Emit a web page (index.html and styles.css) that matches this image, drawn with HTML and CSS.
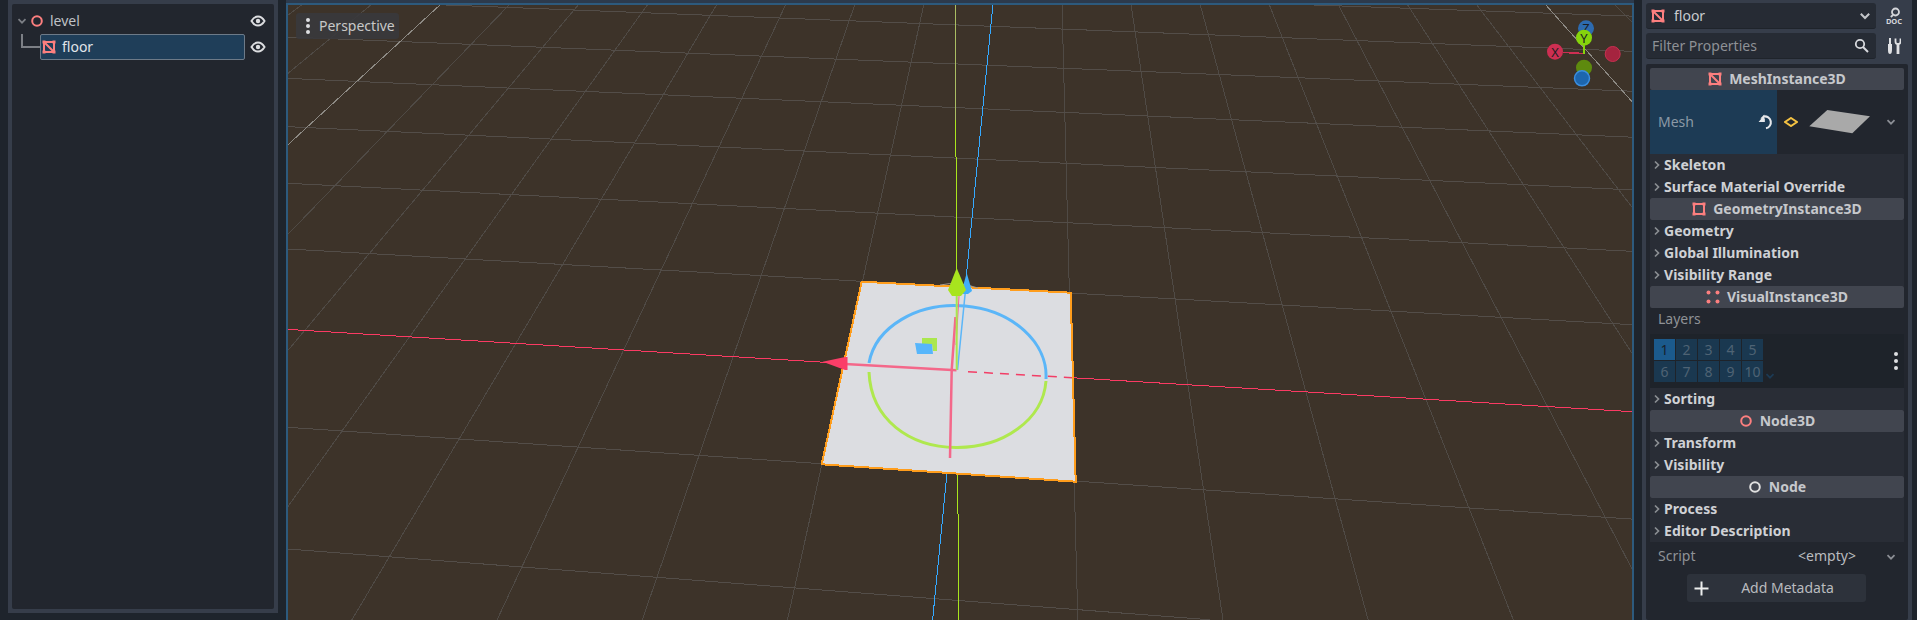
FILE: index.html
```html
<!DOCTYPE html>
<html lang="en">
<head>
<meta charset="utf-8">
<title>Godot editor</title>
<link rel="stylesheet" href="styles.css">
</head>
<body>
<svg class="defs" width="0" height="0" aria-hidden="true">
  <symbol id="i-eye" viewBox="0 0 16 16">
    <path d="M1.5 8C3.5 4.6 5.6 3.4 8 3.4S12.500 4.600 14.500 8C12.500 11.400 10.400 12.600 8 12.600S3.500 11.400 1.500 8Z" fill="none" stroke="currentColor" stroke-width="2"/>
    <circle cx="8" cy="8" r="2.200" fill="currentColor"/>
  </symbol>
  <symbol id="i-mesh" viewBox="0 0 14 14">
    <path d="M2 2H12V12H2ZM2 2L12 12" fill="none" stroke="currentColor" stroke-width="2"/>
    <path d="M0.500 0.500H3.500V3.500H0.500ZM10.500 0.500H13.500V3.500H10.500ZM0.500 10.500H3.500V13.500H0.500ZM10.500 10.500H13.500V13.500H10.500Z" fill="currentColor"/>
  </symbol>
  <symbol id="i-geometry" viewBox="0 0 14 14">
    <path d="M2 2H12V12H2Z" fill="none" stroke="currentColor" stroke-width="2"/>
    <path d="M0.500 0.500H3.500V3.500H0.500ZM10.500 0.500H13.500V3.500H10.500ZM0.500 10.500H3.500V13.500H0.500ZM10.500 10.500H13.500V13.500H10.500Z" fill="currentColor"/>
  </symbol>
  <symbol id="i-visual" viewBox="0 0 14 14">
    <circle cx="2.500" cy="2.500" r="2" fill="currentColor"/><circle cx="11.500" cy="2.500" r="2" fill="currentColor"/>
    <circle cx="2.500" cy="11.500" r="2" fill="currentColor"/><circle cx="11.500" cy="11.500" r="2" fill="currentColor"/>
  </symbol>
  <symbol id="i-ring" viewBox="0 0 14 14">
    <circle cx="7" cy="7" r="4.800" fill="none" stroke="currentColor" stroke-width="2"/>
  </symbol>
  <symbol id="i-down" viewBox="0 0 10 10">
    <path d="M1.500 3.200L5 6.700L8.500 3.200" fill="none" stroke="currentColor" stroke-width="1.700"/>
  </symbol>
  <symbol id="i-right" viewBox="0 0 8 10">
    <path d="M2 1.500L5.500 5L2 8.500" fill="none" stroke="currentColor" stroke-width="1.700"/>
  </symbol>
</svg>

<div class="app">
  <aside class="scene-dock">
    <div class="scene-tree">
      <div class="tree-row tree-root">
        <svg class="tree-fold" width="10" height="10"><use href="#i-down"/></svg>
        <svg class="tree-icon icon-red" width="14" height="14"><use href="#i-ring"/></svg>
        <span class="tree-label">level</span>
        <svg class="tree-eye" width="16" height="16"><use href="#i-eye"/></svg>
      </div>
      <div class="tree-row tree-child">
        <span class="tree-line"></span>
        <div class="tree-selected">
          <svg class="icon-red" width="14" height="14"><use href="#i-mesh"/></svg>
          <span class="tree-label-sel">floor</span>
        </div>
        <svg class="tree-eye" width="16" height="16"><use href="#i-eye"/></svg>
      </div>
    </div>
  </aside>

  <main class="center">
    <div class="viewport">
      <svg class="scene" width="1344" height="615" viewBox="288 5 1344 615">
        <g class="grid-v">
          <line x1="303" y1="4" x2="-519.400" y2="620"/><line x1="510" y1="4" x2="-83.800" y2="620"/>
          <line x1="372" y1="4" x2="-374.200" y2="620"/><line x1="579" y1="4" x2="61.400" y2="620"/>
          <line x1="648" y1="4" x2="206.600" y2="620"/><line x1="717" y1="4" x2="351.800" y2="620"/>
          <line x1="786" y1="4" x2="497" y2="620"/><line x1="855" y1="4" x2="642.200" y2="620"/>
          <line x1="924" y1="4" x2="787.400" y2="620"/><line x1="1062" y1="4" x2="1077.800" y2="620"/>
          <line x1="1131" y1="4" x2="1223" y2="620"/><line x1="1200" y1="4" x2="1368.200" y2="620"/>
          <line x1="1269" y1="4" x2="1513.400" y2="620"/><line x1="1338" y1="4" x2="1658.600" y2="620"/>
          <line x1="1407" y1="4" x2="1803.800" y2="620"/><line x1="1476" y1="4" x2="1949" y2="620"/>
          <line x1="1614" y1="4" x2="2239.400" y2="620"/>
        </g>
        <g class="grid-h">
          <line x1="1285" y1="4" x2="1632" y2="16.100"/><line x1="400" y1="3.200" x2="1632" y2="51.300"/>
          <line x1="288" y1="37" x2="1632" y2="91.200"/><line x1="288" y1="78.400" x2="1632" y2="137.200"/>
          <line x1="288" y1="126.700" x2="1632" y2="189.900"/><line x1="288" y1="183.300" x2="1632" y2="251.300"/>
          <line x1="288" y1="249" x2="1632" y2="324.700"/><line x1="288" y1="427.300" x2="1632" y2="519.100"/>
          <line x1="288" y1="549" x2="1210" y2="619.800"/>
        </g>
        <g class="grid-major">
          <line x1="441" y1="4" x2="-229" y2="620"/><line x1="1545" y1="4" x2="2094.200" y2="620"/>
        </g>
        <line class="axis-blue" x1="993" y1="4" x2="932.600" y2="620"/>
        <line class="axis-red" x1="288" y1="329.400" x2="830" y2="362.600"/>
        <line class="axis-red" x1="1072" y1="377.700" x2="1632" y2="411.700"/>
        <line class="axis-yellow-far" x1="955.500" y1="4" x2="955.800" y2="120"/>
        <line class="axis-yellow" x1="955.800" y1="120" x2="958.600" y2="620"/>

        <polygon class="plane" points="861.700,281.700 1070.700,292.700 1075.700,481.700 821.700,464.300"/>
        <path class="gizmo-grey" d="M940 285Q958 281 978 288"/>
        <path class="ring-blue" d="M869 363A89 68.500 3 0 1 1046 379"/>
        <path class="ring-green" d="M869 372C871 420 910 447 956 447.500C1003 448 1043 420 1046 381"/>
        <polygon class="square-green" points="922,338 937,338 937,351 933,351 932,344 922,344"/>
        <polygon class="square-blue" points="915,343 932,344 933,354 917,354"/>
        <line class="dash-red" x1="968" y1="371.700" x2="1072" y2="377.700"/>
        <line class="gizmo-red" x1="845" y1="364" x2="956.500" y2="370.300"/>
        <path class="gizmo-red" d="M955.500 317L951.700 370L950 458"/>
        <path class="gizmo-red-thin" d="M960 280L956 345"/>
        <line class="gizmo-blue" x1="957.500" y1="370" x2="966" y2="285"/>
        <polygon class="cone-blue" points="966.700,273 972,291 968,294 963,294 962,290"/>
        <line class="gizmo-green" x1="956.700" y1="370" x2="956.700" y2="290"/>
        <polygon class="cone-green" points="956.700,268 966,290 961,296 952,296 948,290"/>
        <polygon class="cone-red" points="822.700,361.700 845,357 847.500,357 847.500,370 845,370"/>

        <line class="nav-red" x1="1563" y1="52.500" x2="1584" y2="53.500"/>
        <line class="nav-green" x1="1584" y1="53.500" x2="1584" y2="44"/>
        <circle class="nav-z" cx="1586" cy="28.300" r="8"/>
        <text class="nav-text" x="1586" y="33">Z</text>
        <circle class="nav-y" cx="1584" cy="37.700" r="8"/>
        <text class="nav-text" x="1584" y="42.500">Y</text>
        <circle class="nav-x" cx="1555" cy="51.700" r="8"/>
        <text class="nav-text" x="1555" y="56.500">X</text>
        <circle class="nav-nx" cx="1612.700" cy="54" r="7.500"/>
        <circle class="nav-ny" cx="1584" cy="67.700" r="8"/>
        <circle class="nav-nz" cx="1582" cy="78.300" r="7.500"/>
      </svg>
      <div class="view-label">
        <span class="view-dots"><i></i><i></i><i></i></span>
        <span class="view-text">Perspective</span>
      </div>
    </div>
  </main>

  <aside class="inspector">
    <div class="insp-head">
      <div class="field">
        <svg class="icon-red" width="14" height="14"><use href="#i-mesh"/></svg>
        <span class="field-name">floor</span>
        <svg class="field-chevron" width="12" height="12"><use href="#i-down"/></svg>
      </div>
      <div class="head-btn">
        <svg width="18" height="18" viewBox="0 0 18 18">
          <circle cx="10.500" cy="5" r="3.500" fill="none" stroke="#d4d6da" stroke-width="1.800"/>
          <path d="M8 8L5.800 10" stroke="#d4d6da" stroke-width="1.800"/>
          <text class="doc-text" x="9" y="17">DOC</text>
        </svg>
      </div>
    </div>
    <div class="insp-head">
      <div class="field filter">
        <span class="filter-text">Filter Properties</span>
        <svg class="field-search" width="15" height="15" viewBox="0 0 15 15">
          <circle cx="6" cy="6" r="4.200" fill="none" stroke="#d8dade" stroke-width="1.800"/>
          <path d="M9 9L14 14" stroke="#d8dade" stroke-width="2"/>
        </svg>
      </div>
      <div class="head-btn">
        <svg width="14" height="16" viewBox="0 0 14 16">
          <path d="M2 0H4V6H5V10.500C5 13 5 16 3 16S1 13 1 10.500V6H2Z" fill="#e0e1e4"/>
          <path d="M8.500 0.500V3.500C8.500 5 9.500 6 10.500 6V15.500H11.500V6C12.500 6 13.500 5 13.500 3.500V0.500" fill="none" stroke="#e0e1e4" stroke-width="1.800"/>
        </svg>
      </div>
    </div>

    <div class="props">
      <div class="section"><svg class="icon-red" width="14" height="14"><use href="#i-mesh"/></svg>MeshInstance3D</div>
      <div class="mesh-row">
        <div class="mesh-label">
          <span class="mesh-name">Mesh</span>
          <svg width="16" height="16" viewBox="0 0 14 14">
            <path d="M5 2.200A5 5 0 1 1 7 12.500" fill="none" stroke="#e6e7ea" stroke-width="1.800"/>
            <path d="M0.500 7H6V4H3ZM5.500 0.500V4H2Z" fill="#e6e7ea"/>
          </svg>
        </div>
        <div class="mesh-value">
          <svg width="14" height="10" viewBox="0 0 14 10">
            <path d="M7 1L13 5L7 9L1 5Z" fill="none" stroke="#f5c242" stroke-width="2"/>
          </svg>
          <svg class="mesh-preview" width="62" height="24" viewBox="0 0 62 24">
            <polygon points="0.300,16.300 18.300,0 61,6.300 43.300,23.300" fill="#a9a9a9"/>
          </svg>
          <svg class="prop-chevron" width="10" height="10"><use href="#i-down"/></svg>
        </div>
      </div>
      <div class="cat"><svg width="8" height="10"><use href="#i-right"/></svg>Skeleton</div>
      <div class="cat"><svg width="8" height="10"><use href="#i-right"/></svg>Surface Material Override</div>
      <div class="section"><svg class="icon-red" width="14" height="14"><use href="#i-geometry"/></svg>GeometryInstance3D</div>
      <div class="cat"><svg width="8" height="10"><use href="#i-right"/></svg>Geometry</div>
      <div class="cat"><svg width="8" height="10"><use href="#i-right"/></svg>Global Illumination</div>
      <div class="cat"><svg width="8" height="10"><use href="#i-right"/></svg>Visibility Range</div>
      <div class="section"><svg class="icon-red" width="14" height="14"><use href="#i-visual"/></svg>VisualInstance3D</div>
      <div class="prop-caption">Layers</div>
      <div class="layers">
        <div class="layer-grid">
          <span class="layer on">1</span><span class="layer">2</span><span class="layer">3</span><span class="layer">4</span><span class="layer">5</span>
          <span class="layer">6</span><span class="layer">7</span><span class="layer">8</span><span class="layer">9</span><span class="layer">10</span>
        </div>
        <svg class="layer-more" width="10" height="10"><use href="#i-down"/></svg>
        <span class="layer-dots"><i></i><i></i><i></i></span>
      </div>
      <div class="cat"><svg width="8" height="10"><use href="#i-right"/></svg>Sorting</div>
      <div class="section"><svg class="icon-red" width="14" height="14"><use href="#i-ring"/></svg>Node3D</div>
      <div class="cat"><svg width="8" height="10"><use href="#i-right"/></svg>Transform</div>
      <div class="cat"><svg width="8" height="10"><use href="#i-right"/></svg>Visibility</div>
      <div class="section"><svg class="icon-white" width="14" height="14"><use href="#i-ring"/></svg>Node</div>
      <div class="cat"><svg width="8" height="10"><use href="#i-right"/></svg>Process</div>
      <div class="cat"><svg width="8" height="10"><use href="#i-right"/></svg>Editor Description</div>
      <div class="script-row">
        <span class="script-label">Script</span>
        <span class="script-value">&lt;empty&gt;</span>
        <svg class="prop-chevron" width="10" height="10"><use href="#i-down"/></svg>
      </div>
      <div class="add-meta">
        <svg width="15" height="15" viewBox="0 0 15 15"><path d="M7.500 0.500V14.500M0.500 7.500H14.500" stroke="#eceded" stroke-width="2"/></svg>
        <span>Add Metadata</span>
      </div>
    </div>
  </aside>
</div>
</body>
</html>
```

FILE: styles.css
```css
* { box-sizing: border-box; }
html, body { margin: 0; padding: 0; }
body {
  width: 1917px;
  height: 620px;
  overflow: hidden;
  background: #1e242c;
  font-family: "Noto Sans", "Open Sans", sans-serif;
  font-size: 14px;
  color: #c6c8cc;
}
.defs { position: absolute; }
svg { display: block; flex: none; }
.icon-red { color: #fc7f7f; }
.icon-white { color: #e0e0e0; }

.app { display: flex; height: 620px; }

/* Scene dock */
.scene-dock {
  flex: none;
  width: 270px;
  height: 613px;
  margin: 0 8px;
  padding: 4px;
  background: #363d4a;
}
.scene-tree {
  height: 100%;
  padding-top: 4px;
  background: #22262e;
  border-radius: 2px;
}
.tree-row { display: flex; align-items: center; height: 26px; padding-right: 8px; }
.tree-root { padding-left: 5px; }
.tree-child { padding-left: 9px; }
.tree-fold { color: #7c7f85; margin-right: 3px; }
.tree-icon { margin-right: 6px; }
.tree-label { padding-bottom: 2px; color: #bfc1c5; }
.tree-label-sel { padding-bottom: 2px; }
.tree-eye { margin-left: auto; color: #dcdde0; }
.tree-line {
  flex: none;
  align-self: flex-start;
  width: 19px;
  height: 14px;
  border-left: 2px solid #7c7f85;
  border-bottom: 2px solid #7c7f85;
}
.tree-selected {
  display: flex;
  align-items: center;
  gap: 6px;
  flex: none;
  width: 205px;
  height: 26px;
  padding-left: 1px;
  background: #1f3e59;
  border: 1px solid #6d7a88;
  border-radius: 2px;
  color: #e2e5e9;
}

/* Center viewport */
.center {
  flex: none;
  width: 1348px;
  height: 620px;
  padding-top: 3px;
  background: #2c3a4c;
}
.viewport {
  position: relative;
  height: 617px;
  border: 2px solid #2d5a7d;
  border-bottom: 0;
  background: #3d3329;
  overflow: hidden;
}
.grid-v line, .grid-h line, .grid-major line { shape-rendering: crispEdges; stroke-width: 1; }
.grid-v line { stroke: #4f4a45; }
.grid-h line { stroke: #534d48; }
.grid-major line { stroke: #8d8a84; }
.axis-blue, .axis-red, .axis-yellow, .axis-yellow-far { shape-rendering: crispEdges; }
.axis-blue { stroke: #35a9ff; }
.axis-red { stroke: #fb3a63; stroke-width: 1; }
.axis-yellow { stroke: #a9e51d; }
.axis-yellow-far { stroke: #a9bd62; }
.plane { fill: #dcdde1; stroke: #ff9d1c; stroke-width: 2; shape-rendering: crispEdges; }
.gizmo-grey { fill: none; stroke: #a39a90; stroke-width: 1; }
.ring-blue { fill: none; stroke: #5bb6f8; stroke-width: 3; }
.ring-green { fill: none; stroke: #afe84e; stroke-width: 3; }
.square-green { fill: #abe74e; }
.square-blue { fill: #57b6fb; }
.dash-red { stroke: #f23e66; stroke-width: 1.500; stroke-dasharray: 9 7; }
.gizmo-red { fill: none; stroke: #f4688a; stroke-width: 2.500; }
.gizmo-red-thin { fill: none; stroke: #f4688a; stroke-width: 1; }
.gizmo-blue { stroke: #5bb6f8; stroke-width: 1.500; }
.gizmo-green { stroke: #a8e64e; stroke-width: 2; }
.cone-blue { fill: #41aef9; }
.cone-green { fill: #a8e41e; }
.cone-red { fill: #fb3e68; }
.nav-red { stroke: #cd2f52; stroke-width: 1.500; shape-rendering: crispEdges; }
.nav-green { stroke: #86d40c; stroke-width: 2; shape-rendering: crispEdges; }
.nav-z { fill: #2d6bb0; }
.nav-y { fill: #86d40c; }
.nav-x { fill: #cd2f52; }
.nav-nx { fill: #a5243f; stroke: #c83050; stroke-width: 1; }
.nav-ny { fill: #5e8a0e; }
.nav-nz { fill: #1d66ae; stroke: #3a8ee0; stroke-width: 1.500; }
.nav-text { font-size: 13px; text-anchor: middle; fill: #1b1d22; }
.view-label {
  position: absolute;
  left: 8px;
  top: 8px;
  display: flex;
  align-items: center;
  gap: 8px;
  width: 103px;
  height: 26px;
  padding-left: 9px;
  background: rgba(56, 56, 60, 0.9);
  border-radius: 3px;
  color: #c8c8c8;
}
.view-text { padding-bottom: 2px; }
.view-dots, .layer-dots { display: flex; flex-direction: column; align-items: center; gap: 2px; }
.view-dots { width: 6px; }
.view-dots i, .layer-dots i { display: block; width: 4px; height: 4px; border-radius: 50%; background: #dedfe2; }

/* Inspector */
.inspector {
  flex: none;
  width: 270px;
  height: 620px;
  margin-left: 8px;
  padding: 3px 4px 0;
  background: #363d4a;
}
.insp-head { display: flex; height: 26px; margin-bottom: 4px; }
.insp-head + .insp-head { margin-bottom: 5px; }
.field {
  display: flex;
  align-items: center;
  flex: none;
  width: 230px;
  padding: 0 5px;
  background: #262b34;
  border-bottom: 1px solid #1f242b;
  border-radius: 3px;
}
.field > svg.icon-red { margin-right: 9px; }
.field-name { color: #c9cbcf; }
.field-chevron { margin-left: auto; color: #c4c6ca; }
.filter { padding-left: 6px; padding-right: 7px; }
.filter-text { color: #8e9196; }
.field-search { margin-left: auto; }
.head-btn { display: flex; align-items: center; justify-content: center; flex: 1; padding-left: 4px; }
.doc-text { font-size: 7.500px; font-weight: 700; text-anchor: middle; fill: #d4d6da; }

.props {
  height: 556px;
  padding: 4px;
  background: #22262e;
  border-radius: 2px;
}
.section {
  display: flex;
  align-items: center;
  justify-content: center;
  gap: 7px;
  height: 22px;
  padding-bottom: 1px;
  background: #41454f;
  border-radius: 2px;
  font-weight: 700;
  color: #c6c8cc;
}
.cat {
  display: flex;
  align-items: center;
  gap: 3px;
  height: 22px;
  padding: 0 0 2px 3px;
  background: #292d36;
  font-weight: 700;
  letter-spacing: 0.04px;
  color: #cfd1d5;
}
.cat svg { color: #8b8e93; margin-top: 2px; }
.mesh-row { display: flex; height: 64px; }
.mesh-label {
  display: flex;
  align-items: center;
  justify-content: space-between;
  width: 127px;
  padding: 0 3px 0 8px;
  background: #1d3b55;
  color: #8b99a6;
}
.mesh-name { padding-bottom: 2px; }
.mesh-value { display: flex; align-items: center; flex: 1; padding-left: 7px; }
.mesh-preview { margin-left: 11px; }
.prop-chevron { color: #8c8f95; }
.mesh-value .prop-chevron { margin-left: 15px; }
.prop-caption { height: 26px; padding: 0 8px; line-height: 22px; color: #8f9296; }
.layers {
  display: flex;
  height: 54px;
  padding: 5px 6px 5px 4px;
  background: #1e232a;
}
.layer-grid { display: grid; grid-template-columns: repeat(5, 21px); grid-auto-rows: 21px; gap: 1px; }
.layer {
  display: flex;
  align-items: center;
  justify-content: center;
  background: #1a3850;
  color: #4f6374;
}
.layer.on { background: #1b5a8c; color: #16222d; }
.layer-more { align-self: flex-end; margin: 0 0 2px 2px; color: #1c3a54; }
.layer-dots { margin: auto 0 auto auto; gap: 3px; width: 4px; }
.script-row { display: flex; align-items: center; height: 32px; padding: 0 0 5px 8px; }
.script-label { width: 119px; color: #8f9296; }
.script-value { width: 100px; text-align: center; color: #b9bbbf; }
.script-row .prop-chevron { margin: 3px 0 0 9px; }
.add-meta {
  display: flex;
  align-items: center;
  width: 179px;
  height: 28px;
  margin-left: 37px;
  padding-left: 7px;
  background: #2d323b;
  border-radius: 3px;
  color: #b9bbbf;
}
.add-meta span { flex: 1; padding-bottom: 1px; text-align: center; }
```
